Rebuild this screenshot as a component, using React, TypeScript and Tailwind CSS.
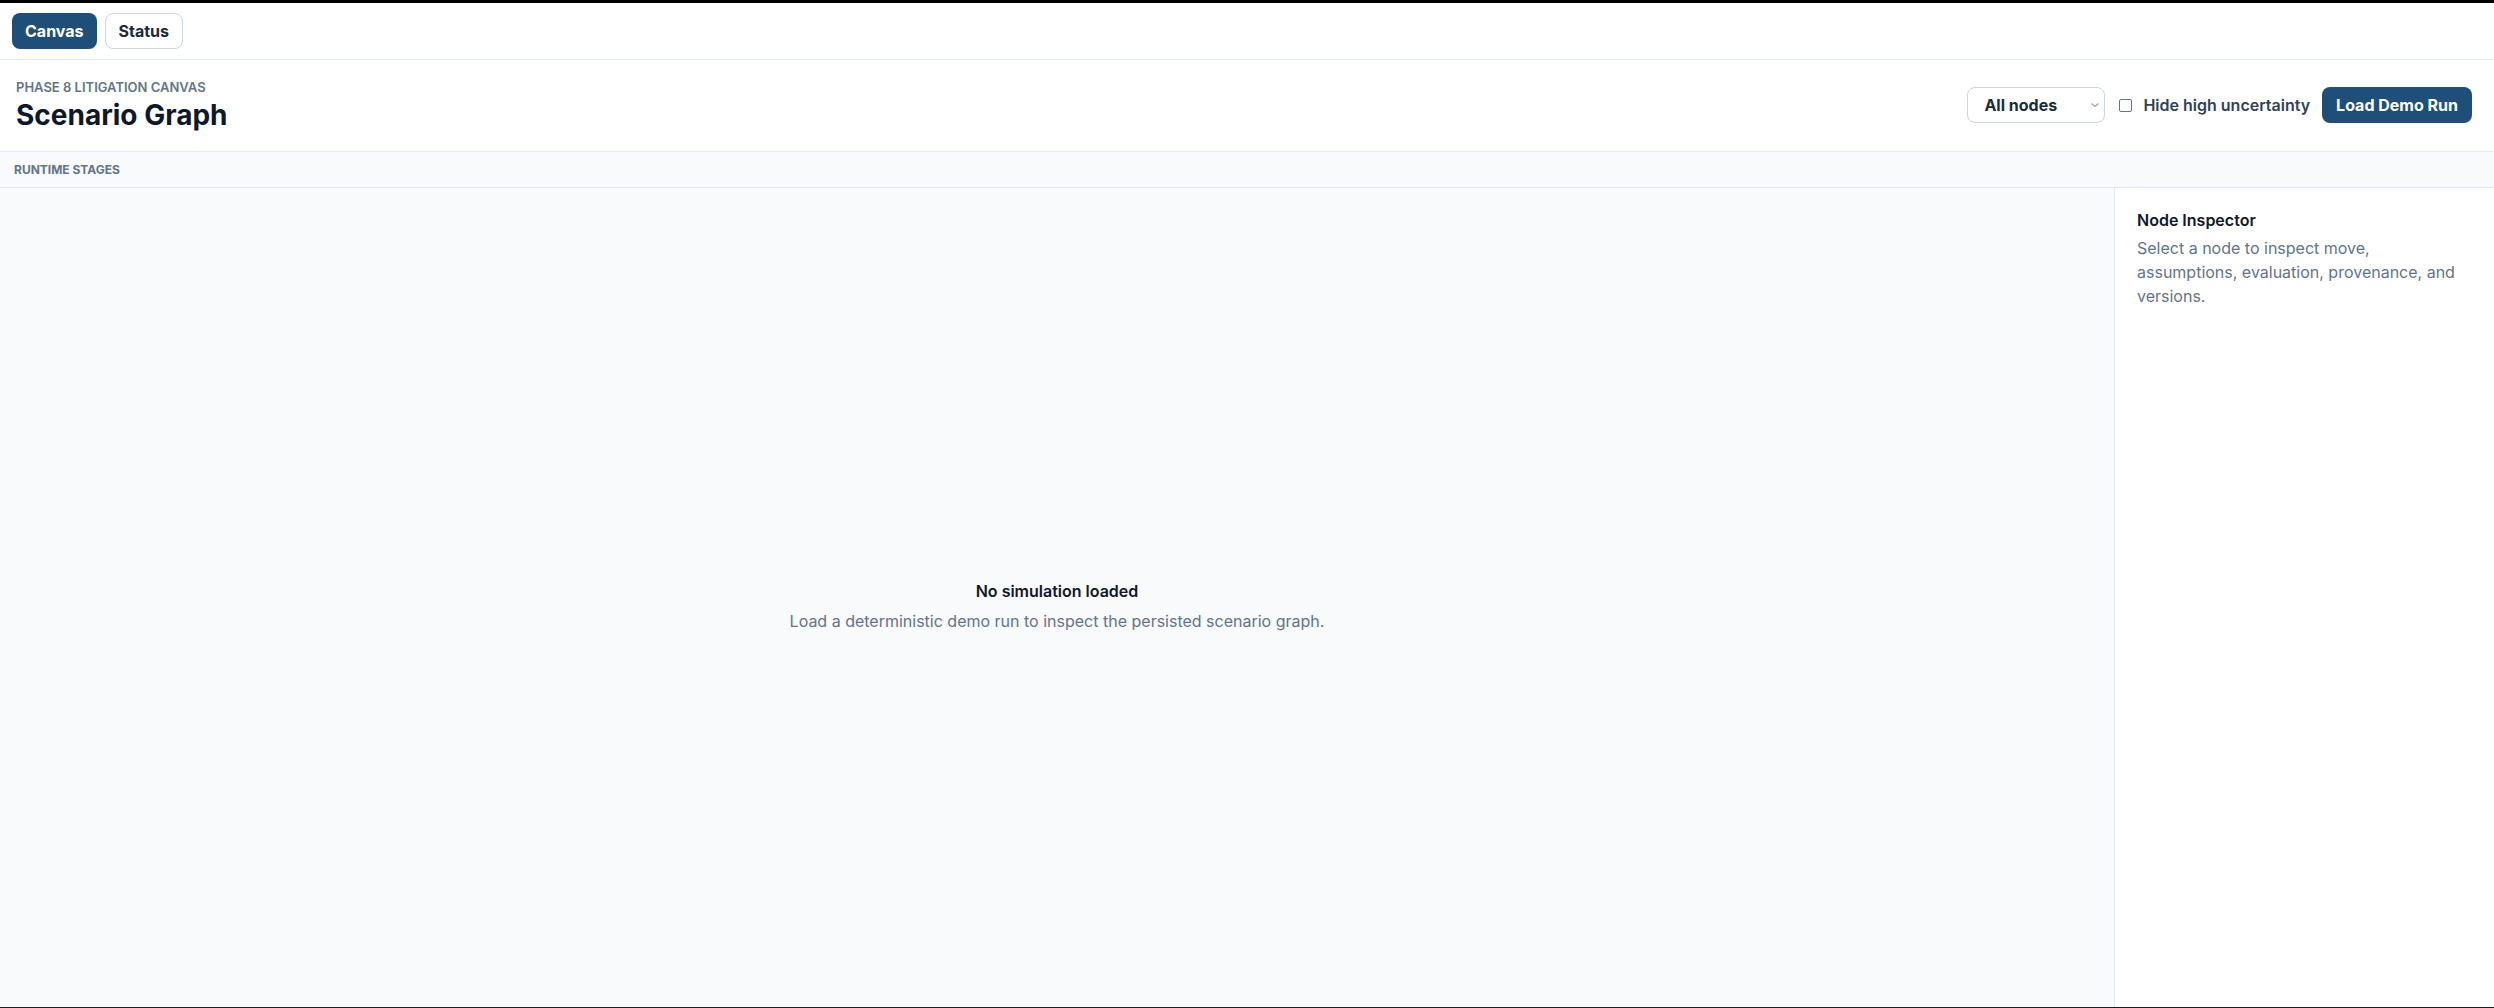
import React, { useState } from "react";

const font = { fontFamily: "Inter, 'Noto Sans', 'Liberation Sans', sans-serif" };

const tabOn = "h-9 rounded-lg bg-[#1f4e79] px-[13px] text-base font-bold text-white";
const tabOff = "h-9 rounded-lg border border-slate-300 bg-white px-[13px] text-base font-bold text-slate-800";

function TabBar() {
  const [tab, setTab] = useState("canvas");
  return (
    <div className="flex h-[57px] shrink-0 items-center gap-2 border-b border-slate-200 bg-white px-3">
      <button onClick={() => setTab("canvas")} className={tab === "canvas" ? tabOn : tabOff}>
        Canvas
      </button>
      <button onClick={() => setTab("status")} className={tab === "status" ? tabOn : tabOff}>
        Status
      </button>
    </div>
  );
}

function Header() {
  const [hide, setHide] = useState(false);
  return (
    <div className="flex shrink-0 items-center justify-between border-b border-slate-200 bg-white pt-[17px] pb-[18px] pl-4 pr-[22px]">
      <div>
        <div className="text-[13px] leading-5 font-semibold uppercase text-slate-500">
          Phase 8 Litigation Canvas
        </div>
        <h1 className="text-[28px] leading-9 font-bold text-slate-900">Scenario Graph</h1>
      </div>
      <div className="flex items-center gap-3">
        <div className="relative">
          <select className="h-9 w-[138px] appearance-none rounded-lg border border-slate-300 bg-white pl-4 pr-8 text-base font-bold text-slate-800 outline-none">
            <option>All nodes</option>
            <option>Critical path</option>
            <option>Low uncertainty</option>
          </select>
          <svg
            className="pointer-events-none absolute right-[5px] top-1/2 -translate-y-1/2"
            width="10"
            height="6"
            viewBox="0 0 10 6"
            fill="none"
          >
            <path d="M1.5 1.5 L5 4.5 L8.5 1.5" stroke="#94a3b8" strokeWidth="1.2" />
          </svg>
        </div>
        <label
          onClick={() => setHide(!hide)}
          className="flex cursor-pointer items-center gap-[11px] text-base font-semibold text-slate-700"
        >
          <span
            className={
              hide
                ? "ml-0.5 h-[13px] w-[13px] rounded-[2px] border border-[#1f4e79] bg-[#1f4e79]"
                : "ml-0.5 h-[13px] w-[13px] rounded-[2px] border border-slate-500 bg-white"
            }
          />
          Hide high uncertainty
        </label>
        <button className="h-9 rounded-lg bg-[#1f4e79] px-[14px] text-base font-bold text-white">
          Load Demo Run
        </button>
      </div>
    </div>
  );
}

export default function App() {
  return (
    <div
      style={font}
      className="flex h-screen flex-col overflow-hidden border-t-[3px] border-b border-t-black border-b-[#1c1c1e] bg-white"
    >
      <TabBar />
      <Header />
      <div className="flex h-9 shrink-0 items-center border-b border-slate-200 bg-slate-50 pl-[14px]">
        <span className="text-xs font-bold uppercase text-slate-500">Runtime Stages</span>
      </div>
      <div className="flex min-h-0 flex-1">
        <div className="flex flex-1 flex-col items-center justify-center bg-slate-50 pt-4 text-center">
          <div className="text-base leading-6 font-semibold text-slate-900">No simulation loaded</div>
          <div className="mt-1.5 text-base leading-6 text-slate-500">
            Load a deterministic demo run to inspect the persisted scenario graph.
          </div>
        </div>
        <aside className="w-[380px] shrink-0 border-l border-slate-200 bg-white pt-5 pl-[22px] pr-8">
          <div className="text-base leading-6 font-semibold text-slate-900">Node Inspector</div>
          <p className="mt-1 text-base leading-6 text-slate-500">
            Select a node to inspect move, assumptions, evaluation, provenance, and versions.
          </p>
        </aside>
      </div>
    </div>
  );
}
